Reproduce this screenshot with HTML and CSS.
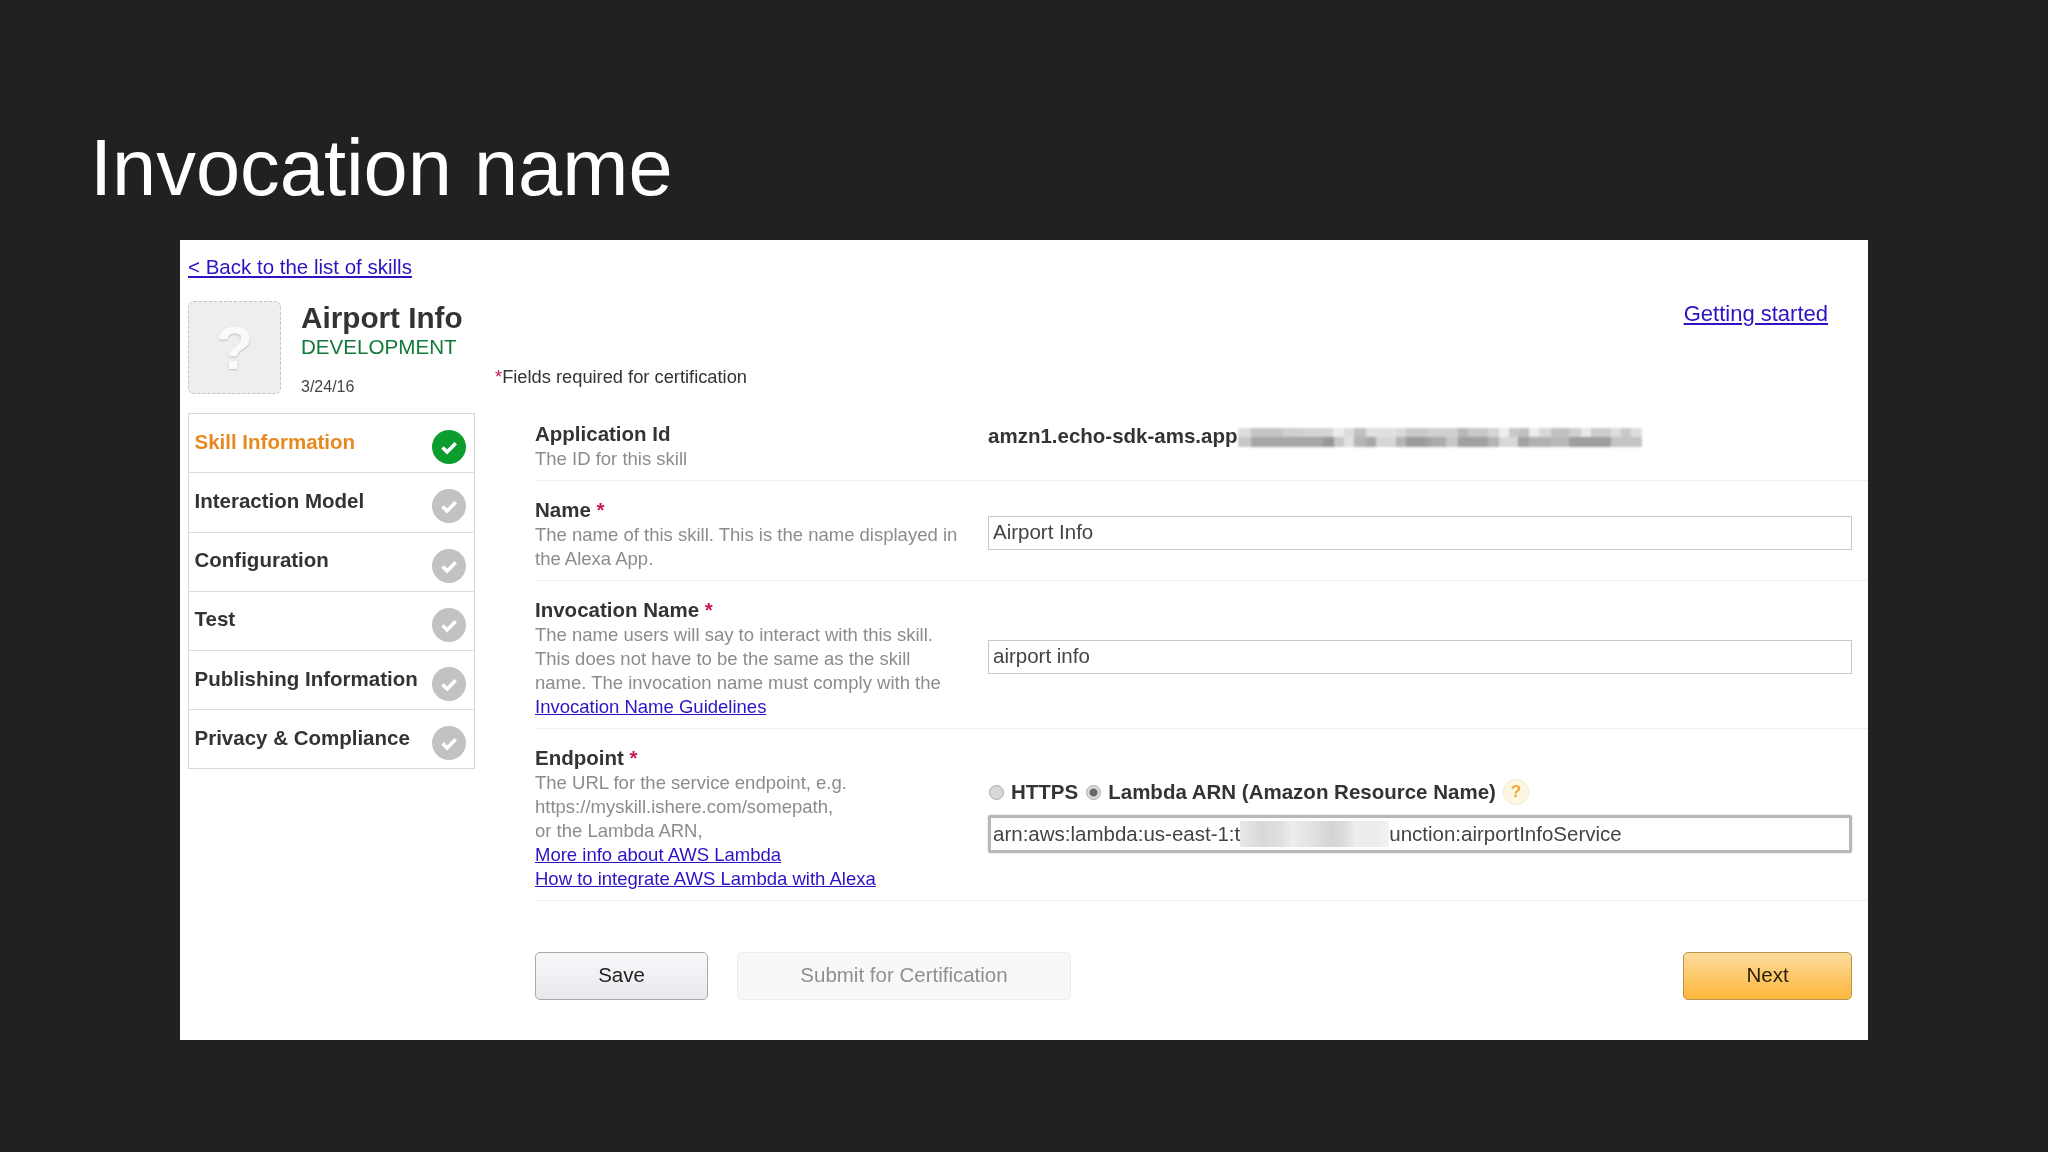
FILE: index.html
```html
<!DOCTYPE html>
<html lang="en">
<head>
<meta charset="utf-8">
<title>Invocation name</title>
<link rel="stylesheet" href="styles.css">
</head>
<body>
<h1 class="slide-title">Invocation name</h1>
<section class="panel">
  <a class="back-link" href="#">&lt; Back to the list of skills</a>
  <div class="panel-body">
    <aside class="sidebar">
      <div class="skill-head">
        <div class="skill-icon">?</div>
        <div class="skill-meta">
          <div class="skill-name">Airport Info</div>
          <div class="skill-stage">DEVELOPMENT</div>
          <div class="skill-date">3/24/16</div>
        </div>
      </div>
      <ul class="steps">
        <li class="step step-active"><span>Skill Information</span><svg class="check" viewBox="0 0 34 34"><circle cx="17" cy="17" r="17"/><path d="M10.5 17.5l4.6 4.4 8.6-8.6"/></svg></li>
        <li class="step"><span>Interaction Model</span><svg class="check" viewBox="0 0 34 34"><circle cx="17" cy="17" r="17"/><path d="M10.5 17.5l4.6 4.4 8.6-8.6"/></svg></li>
        <li class="step"><span>Configuration</span><svg class="check" viewBox="0 0 34 34"><circle cx="17" cy="17" r="17"/><path d="M10.5 17.5l4.6 4.4 8.6-8.6"/></svg></li>
        <li class="step"><span>Test</span><svg class="check" viewBox="0 0 34 34"><circle cx="17" cy="17" r="17"/><path d="M10.5 17.5l4.6 4.4 8.6-8.6"/></svg></li>
        <li class="step"><span>Publishing Information</span><svg class="check" viewBox="0 0 34 34"><circle cx="17" cy="17" r="17"/><path d="M10.5 17.5l4.6 4.4 8.6-8.6"/></svg></li>
        <li class="step"><span>Privacy &amp; Compliance</span><svg class="check" viewBox="0 0 34 34"><circle cx="17" cy="17" r="17"/><path d="M10.5 17.5l4.6 4.4 8.6-8.6"/></svg></li>
      </ul>
    </aside>
    <main class="main">
      <div class="top-links"><a class="started" href="#">Getting started</a></div>
      <p class="required-note"><span class="star">*</span>Fields required for certification</p>
      <div class="row">
        <div class="info"><div class="label">Application Id</div><div class="desc">The ID for this skill</div></div>
        <div class="value app-id"><span>amzn1.echo-sdk-ams.app</span><svg class="pixels" viewBox="0 0 404 19" preserveAspectRatio="none"><rect x="0" width="13" height="9" fill="#dcdcdc"/><rect x="13" width="32" height="9" fill="#c4c4c4"/><rect x="45" width="20" height="9" fill="#cfcfcf"/><rect x="65" width="30" height="9" fill="#d4d4d4"/><rect x="95" width="11" height="9" fill="#ececec"/><rect x="106" width="10" height="9" fill="#dcdcdc"/><rect x="116" width="12" height="9" fill="#c0c0c0"/><rect x="128" width="30" height="9" fill="#e0e0e0"/><rect x="158" width="10" height="9" fill="#dadada"/><rect x="168" width="22" height="9" fill="#c9c9c9"/><rect x="190" width="3" height="9" fill="#d2d2d2"/><rect x="193" width="27" height="9" fill="#d0d0d0"/><rect x="220" width="10" height="9" fill="#b8b8b8"/><rect x="230" width="20" height="9" fill="#c8c8c8"/><rect x="250" width="11" height="9" fill="#d4d4d4"/><rect x="261" width="10" height="9" fill="#eeeeee"/><rect x="271" width="10" height="9" fill="#c8c8c8"/><rect x="281" width="10" height="9" fill="#c0c0c0"/><rect x="291" width="10" height="9" fill="#ececec"/><rect x="301" width="12" height="9" fill="#d8d8d8"/><rect x="313" width="18" height="9" fill="#c2c2c2"/><rect x="331" width="12" height="9" fill="#cfcfcf"/><rect x="343" width="10" height="9" fill="#e8e8e8"/><rect x="353" width="20" height="9" fill="#cccccc"/><rect x="373" width="10" height="9" fill="#dcdcdc"/><rect x="383" width="10" height="9" fill="#c8c8c8"/><rect x="393" width="11" height="9" fill="#dddddd"/><rect x="0" y="9" width="13" height="10" fill="#c8c8c8"/><rect x="13" y="9" width="72" height="10" fill="#a6a6a6"/><rect x="85" y="9" width="11" height="10" fill="#979797"/><rect x="96" y="9" width="10" height="10" fill="#c8c8c8"/><rect x="106" y="9" width="10" height="10" fill="#e0e0e0"/><rect x="116" y="9" width="12" height="10" fill="#b4b4b4"/><rect x="128" y="9" width="10" height="10" fill="#a8a8a8"/><rect x="138" y="9" width="20" height="10" fill="#d6d6d6"/><rect x="158" y="9" width="10" height="10" fill="#b4b4b4"/><rect x="168" y="9" width="20" height="10" fill="#9a9a9a"/><rect x="188" y="9" width="5" height="10" fill="#a4a4a4"/><rect x="193" y="9" width="15" height="10" fill="#acacac"/><rect x="208" y="9" width="12" height="10" fill="#c6c6c6"/><rect x="220" y="9" width="30" height="10" fill="#a0a0a0"/><rect x="250" y="9" width="11" height="10" fill="#b4b4b4"/><rect x="261" y="9" width="19" height="10" fill="#d8d8d8"/><rect x="280" y="9" width="11" height="10" fill="#a2a2a2"/><rect x="291" y="9" width="22" height="10" fill="#b0b0b0"/><rect x="313" y="9" width="18" height="10" fill="#b8b8b8"/><rect x="331" y="9" width="42" height="10" fill="#9e9e9e"/><rect x="373" y="9" width="31" height="10" fill="#c4c4c4"/></svg></div>
      </div>
      <div class="row">
        <div class="info"><div class="label">Name <span class="star">*</span></div><div class="desc">The name of this skill. This is the name displayed in the Alexa App.</div></div>
        <div class="value"><div class="field">Airport Info</div></div>
      </div>
      <div class="row">
        <div class="info"><div class="label">Invocation Name <span class="star">*</span></div><div class="desc">The name users will say to interact with this skill. This does not have to be the same as the skill name. The invocation name must comply with the <a class="desc-link" href="#">Invocation Name Guidelines</a></div></div>
        <div class="value"><div class="field">airport info</div></div>
      </div>
      <div class="row">
        <div class="info"><div class="label">Endpoint <span class="star">*</span></div><div class="desc">The URL for the service endpoint, e.g.<br>https://myskill.ishere.com/somepath,<br>or the Lambda ARN,<br><a href="#">More info about AWS Lambda</a><br><a href="#">How to integrate AWS Lambda with Alexa</a></div></div>
        <div class="value endpoint">
          <div class="radios">
            <span class="radio"></span><span>HTTPS</span>
            <span class="radio radio-on"></span><span>Lambda ARN (Amazon Resource Name)</span>
            <span class="help">?</span>
          </div>
          <div class="field field-focus">arn:aws:lambda:us-east-1:t<span class="smudge"></span>unction:airportInfoService</div>
        </div>
      </div>
      <div class="actions">
        <button class="btn btn-save">Save</button>
        <button class="btn btn-submit">Submit for Certification</button>
        <button class="btn btn-next">Next</button>
      </div>
    </main>
  </div>
</section>
</body>
</html>
```
FILE: styles.css
```css
* { box-sizing: border-box; }
html, body { margin: 0; height: 100%; }
body {
  background: #212121;
  font-family: "Liberation Sans", Arial, sans-serif;
  padding: 122px 0 0 90px;
  overflow: hidden;
}
.slide-title {
  margin: 0;
  height: 118px;
  font-weight: 400;
  font-size: 79.4px;
  line-height: 92px;
  color: #fff;
}
.panel {
  width: 1688px;
  height: 800px;
  margin-left: 90px;
  background: #fff;
  padding: 14px 0 0 8px;
  color: #333;
  filter: blur(0.45px);
}
a { color: #2a14c4; }
.back-link { display: block; font-size: 20.5px; line-height: 26px; height: 47px; }
.panel-body { display: flex; }
.sidebar { width: 287px; flex: none; }
.skill-head { display: flex; gap: 20px; height: 112px; }
.skill-icon {
  width: 93px;
  height: 93px;
  background: #eee;
  border: 1px dashed #c4c4c4;
  border-radius: 6px;
  color: #fafafa;
  font-weight: 700;
  font-size: 62px;
  line-height: 91px;
  text-align: center;
  text-shadow: 0 1px 2px #bbb;
}
.skill-name { font-weight: 700; font-size: 29.7px; line-height: 34px; color: #333; }
.skill-stage { font-size: 20.6px; line-height: 24px; color: #13793b; }
.skill-date { font-size: 16px; line-height: 20px; margin-top: 17.5px; color: #444; }
.steps { list-style: none; margin: 0; padding: 0; border: 1.5px solid #d8d8d8; }
.step {
  height: 59.25px;
  display: flex;
  justify-content: space-between;
  align-items: flex-start;
  padding: 14.5px 8px 0 5.5px;
  font-weight: 700;
  font-size: 20.5px;
  line-height: 26px;
  border-bottom: 1.5px solid #dcdcdc;
  color: #333;
}
.step:last-child { border-bottom: 0; height: 58px; }
.step-active { color: #e8891f; }
.check { width: 34px; height: 34px; margin-top: 1.5px; flex: none; }
.check circle { fill: #c2c2c2; }
.check path { fill: none; stroke: #fff; stroke-width: 3.6; }
.step-active .check circle { fill: #0b9e2f; }
.main { flex: 1; min-width: 0; margin-left: 20px; }
.top-links { display: flex; justify-content: flex-end; padding-right: 40px; height: 60px; }
.started { font-size: 22px; line-height: 26px; height: 26px; }
.required-note { margin: 0; font-size: 18.3px; line-height: 24px; height: 44px; color: #333; padding-top: 4px; }
.star { color: #c8174f; }
.row {
  margin-left: 40px;
  display: grid;
  grid-template-columns: 453px 864px;
  padding-top: 18px;
  padding-bottom: 9px;
  border-bottom: 1px solid #f0f0f0;
}
.label { font-weight: 700; font-size: 20.5px; line-height: 24px; margin: -1px 0 1px; color: #333; }
.desc { font-size: 18.5px; line-height: 24px; color: #8c8c8c; width: 430px; }
.desc-link { display: block; }
.value { display: flex; align-items: center; font-size: 20.5px; padding-bottom: 5px; }
.app-id { font-weight: 700; color: #333; align-items: flex-start; padding: 1px 0 0; }
.pixels { width: 404px; height: 19px; display: block; margin-top: 3.5px; filter: blur(0.8px); }
.field {
  width: 864px;
  height: 34px;
  border: 1px solid #c8c8c8;
  padding-left: 4px;
  font-size: 20.5px;
  line-height: 30px;
  color: #444;
  display: flex;
  background: #fff;
}
.endpoint { flex-direction: column; align-items: flex-start; gap: 9px; justify-content: flex-start; padding: 0; }
.radios { display: flex; align-items: center; height: 28px; font-weight: 700; gap: 7px; margin-top: 31px; color: #333; }
.radio { width: 15px; height: 15px; border-radius: 50%; background: #d8d8d8; border: 1px solid #aaa; margin-left: 1px; }
.radio-on { background: radial-gradient(circle, #666 0 3.5px, #dcdcdc 4.5px); }
.help { width: 26px; height: 26px; border-radius: 50%; background: #fdf6e0; border: 1px solid #f5ebcc; color: #f0a63c; font-size: 17px; line-height: 24px; text-align: center; }
.field-focus { height: 38px; line-height: 32px; border: 3px solid #b8b8b8; border-radius: 2px; padding-left: 2px; box-shadow: 0 0 2px #c8c8c8; }
.smudge { width: 149px; height: 26px; margin-top: 3px; flex: none; background: linear-gradient(90deg, #e8e8e8, #d8d8d8 15%, #e0e0e0 28%, #ededed 35%, #e0e0e0 50%, #d4d4d4 62%, #dcdcdc 70%, #eeeeee 78%, #ececec 92%, #f2f2f2); }
.actions { margin: 51px 0 0 40px; width: 1317px; display: flex; gap: 29px; }
.btn { height: 48px; font-family: inherit; font-size: 20.5px; border-radius: 5px; padding: 0 0 2px; }
.btn-save { width: 173px; border: 1px solid #a9a9a9; background: linear-gradient(#f7f8fa, #e7e9ec); color: #222; }
.btn-submit { width: 334px; border: 1px solid #ececec; background: #f8f8f9; color: #8f8f8f; }
.btn-next { width: 169px; margin-left: auto; border: 1px solid #b8944c; background: linear-gradient(#fcdc9c, #fdb63c); color: #2b1c08; }
```
